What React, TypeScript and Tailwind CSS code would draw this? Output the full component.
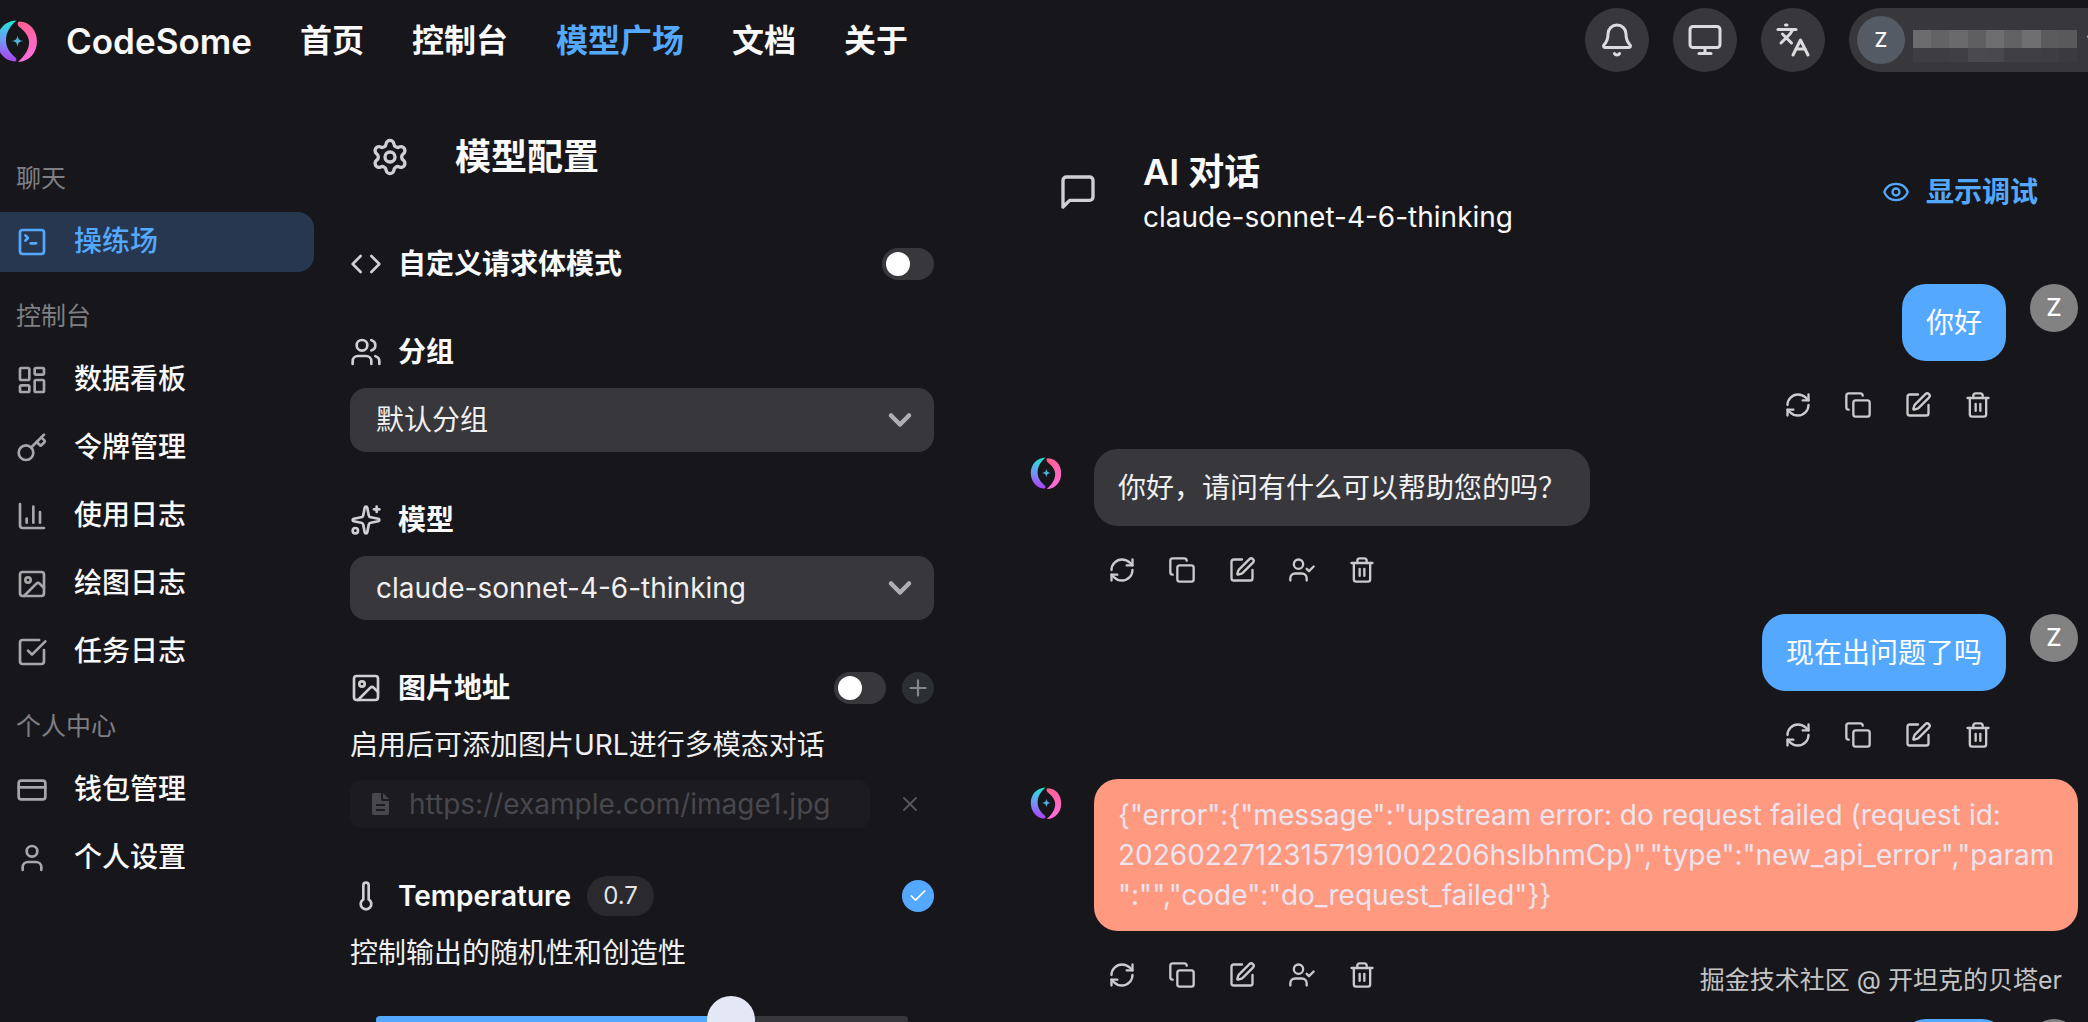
import React, { useId, useState } from 'react';
import {
  Bell,
  ChartColumn,
  Check,
  ChevronDown,
  Code,
  Copy,
  CreditCard,
  Eye,
  Image as ImageIcon,
  Key,
  Languages,
  LayoutDashboard,
  Monitor,
  Plus,
  RefreshCw,
  Settings,
  Sparkles,
  SquareCheckBig,
  SquarePen,
  SquareTerminal,
  Thermometer,
  Trash2,
  User,
  UserCheck,
  Users,
  X,
  type LucideIcon,
} from 'lucide-react';

const NAV = ['首页', '控制台', '模型广场', '文档', '关于'];

const MENU: { title: string; items: { label: string; icon: LucideIcon }[] }[] = [
  { title: '聊天', items: [{ label: '操练场', icon: SquareTerminal }] },
  {
    title: '控制台',
    items: [
      { label: '数据看板', icon: LayoutDashboard },
      { label: '令牌管理', icon: Key },
      { label: '使用日志', icon: ChartColumn },
      { label: '绘图日志', icon: ImageIcon },
      { label: '任务日志', icon: SquareCheckBig },
    ],
  },
  {
    title: '个人中心',
    items: [
      { label: '钱包管理', icon: CreditCard },
      { label: '个人设置', icon: User },
    ],
  },
];

type Message = { role: 'user' | 'assistant'; text: string; error?: boolean };

const MESSAGES: Message[] = [
  { role: 'user', text: '你好' },
  { role: 'assistant', text: '你好，请问有什么可以帮助您的吗？' },
  { role: 'user', text: '现在出问题了吗' },
  {
    role: 'assistant',
    error: true,
    text: '{"error":{"message":"upstream error: do request failed (request id: 20260227123157191002206hslbhmCp)","type":"new_api_error","param":"","code":"do_request_failed"}}',
  },
  { role: 'user', text: '你好' },
];

const Logo: React.FC<{ className: string }> = ({ className }) => {
  const id = useId();
  return (
    <svg viewBox="0 0 40 40" className={className} aria-hidden="true">
      <defs>
        <linearGradient id={`${id}l`} x1="0.6" y1="0" x2="0.5" y2="1">
          <stop offset="0" stopColor="#1fe6d6" />
          <stop offset="0.5" stopColor="#6f9bf5" />
          <stop offset="1" stopColor="#b03cf5" />
        </linearGradient>
        <linearGradient id={`${id}r`} x1="0.3" y1="0" x2="0.5" y2="1">
          <stop offset="0" stopColor="#ff5f8f" />
          <stop offset="1" stopColor="#ff6ee0" />
        </linearGradient>
      </defs>
      <path d="M19.500 0.500C8 1 1 9.500 1 20s7 19 16.500 19.500c2 0 2.500-2 1.200-3.500C13 31 9.500 26 9.500 19.500 9.500 12 13.500 5.500 19.500 0.500Z" fill={`url(#${id}l)`} />
      <path d="M22.500 1.500C32.500 2 39 10 39 20.500S32 39.500 21 40C27.500 34 31.500 28 31.500 21.500 31.500 15 27 10.500 22 6.500c-2-2-1.500-5 0.500-5Z" fill={`url(#${id}r)`} />
      <path d="M20.500 14.500c0.600 3.900 1.600 4.900 5.500 5.500-3.900 0.600-4.900 1.600-5.500 5.500-0.600-3.900-1.600-4.900-5.500-5.500 3.900-0.600 4.900-1.600 5.500-5.500Z" fill="#4db0dd" />
    </svg>
  );
};

const MessageIcon: React.FC = () => (
  <svg
    viewBox="0 0 24 24"
    className="size-10 shrink-0 text-[#d0d0d3]"
    fill="none"
    stroke="currentColor"
    strokeWidth="2"
    strokeLinecap="round"
    strokeLinejoin="round"
    aria-hidden="true"
  >
    <path d="M21 15a2 2 0 0 1-2 2H7l-4 4V5a2 2 0 0 1 2-2h14a2 2 0 0 1 2 2z" />
  </svg>
);

const FileIcon: React.FC = () => (
  <svg viewBox="0 0 24 24" className="size-6 shrink-0" aria-hidden="true">
    <path
      d="M6 1h7v6a2 2 0 0 0 2 2h6v12a2 2 0 0 1-2 2H6a2 2 0 0 1-2-2V3a2 2 0 0 1 2-2Zm2 11v2h9v-2H8Zm0 5v2h9v-2H8Z"
      fill="currentColor"
      fillRule="evenodd"
    />
    <path d="M15 1l6 6h-5a1 1 0 0 1-1-1V1Z" fill="currentColor" />
  </svg>
);

// Masked user name: each tone is one tile
const MASK_TOP = ['bg-[#6c6c6e]', 'bg-[#636365]', 'bg-[#6a6a6c]', 'bg-[#5f5f61]', 'bg-[#6e6e70]', 'bg-[#626264]', 'bg-[#6f6f71]', 'bg-[#5b5b5d]', 'bg-[#59595b]'];
const MASK_BOTTOM = ['bg-[#3e3d42]', 'bg-[#3e3d42]', 'bg-[#403f44]', 'bg-[#4a4a4e]', 'bg-[#49494d]', 'bg-[#403f44]', 'bg-[#403f44]', 'bg-[#3e3d42]', 'bg-[#3b3a3f]'];

const Header: React.FC = () => (
  <header className="flex h-20 shrink-0 items-center justify-between">
    <div className="flex items-center pt-0.5">
      <Logo className="-ml-1 mr-6 size-[42px]" />
      <span className="mr-12 pl-1 text-[35px] font-semibold leading-10">CodeSome</span>
      <nav className="flex gap-12 text-[32px] font-semibold leading-10">
        {NAV.map((item) => (
          <a key={item} href="#" className={item === '模型广场' ? 'text-[#54a9ff]' : 'text-[#f9f9f9]'}>
            {item}
          </a>
        ))}
      </nav>
    </div>
    <div className="flex items-center gap-6 text-[#dcdcde]">
      {[
        { icon: Bell, label: '通知' },
        { icon: Monitor, label: '主题' },
        { icon: Languages, label: '语言' },
      ].map(({ icon: Icon, label }) => (
        <button key={label} type="button" aria-label={label} className="flex size-16 items-center justify-center rounded-full bg-[#38373c]">
          <Icon size={36} />
        </button>
      ))}
      <button type="button" aria-label="账户" className="flex h-16 w-[239px] items-center overflow-hidden rounded-l-full bg-[#38373c] pl-2">
        <span className="flex size-12 shrink-0 items-center justify-center rounded-full bg-[#555b64] text-xl font-medium text-white">Z</span>
        <span className="ml-2 mt-3 w-[164px] shrink-0">
          <span className="flex h-[18px]">
            {MASK_TOP.map((tone, i) => (
              <span key={i} className={`flex-1 ${tone}`} />
            ))}
          </span>
          <span className="flex h-[14px]">
            {MASK_BOTTOM.map((tone, i) => (
              <span key={i} className={`flex-1 ${tone}`} />
            ))}
          </span>
        </span>
        <ChevronDown size={28} className="ml-1 shrink-0 text-[#a0a0a3]" />
      </button>
    </div>
  </header>
);

const Sidebar: React.FC = () => (
  <aside className="w-[314px] shrink-0 pt-[54px]">
    {MENU.map((group) => (
      <section key={group.title}>
        <h2 className="pb-4 pl-4 pt-[26px] text-[25px] leading-9 text-[#7f7f83]">{group.title}</h2>
        <ul className="flex flex-col gap-2">
          {group.items.map(({ label, icon: Icon }) => {
            const active = label === '操练场';
            return (
              <li key={label}>
                <a
                  href="#"
                  className={`flex h-[60px] items-center gap-[26px] rounded-r-2xl pl-4 text-[28px] font-medium leading-10 ${
                    active ? 'bg-[#273750] text-[#54a9ff]' : 'text-[#f9f9f9]'
                  }`}
                >
                  <Icon size={32} className={active ? '' : 'text-[#a7a7aa]'} />
                  <span className="pb-0.5">{label}</span>
                </a>
              </li>
            );
          })}
        </ul>
      </section>
    ))}
  </aside>
);

const Toggle: React.FC<{ label: string }> = ({ label }) => {
  const [on, setOn] = useState(false);
  return (
    <label className={`flex h-8 w-[52px] items-center rounded-full px-1 ${on ? 'justify-end bg-[#54a9ff]' : 'bg-[#38373c]'}`}>
      <input type="checkbox" role="switch" aria-label={label} checked={on} onChange={(e) => setOn(e.target.checked)} className="sr-only" />
      <span className="size-6 rounded-full bg-white" />
    </label>
  );
};

const FieldLabel: React.FC<{ icon: LucideIcon; text: string; htmlFor?: string }> = ({ icon: Icon, text, htmlFor }) => (
  <label htmlFor={htmlFor} className="flex h-8 items-center gap-4 text-[28px] font-semibold leading-8">
    <Icon size={32} className="text-[#d0d0d3]" />
    {text}
  </label>
);

const SelectBox: React.FC<{ id: string; value: string }> = ({ id, value }) => (
  <div className="relative mt-5">
    <select
      id={id}
      defaultValue={value}
      className="h-16 w-full appearance-none rounded-2xl bg-[#38373c] px-[26px] text-[28px] leading-10 text-[#f0f0f1] outline-none"
    >
      <option>{value}</option>
    </select>
    <ChevronDown size={36} strokeWidth={3} className="pointer-events-none absolute right-4 top-[14px] text-[#b0b0b3]" />
  </div>
);

const ConfigPanel: React.FC = () => {
  const [temperature, setTemperature] = useState(0.7);
  const filled = ((temperature - 0.1) / 0.9) * 100;

  return (
    <section className="w-[584px] shrink-0 pt-10">
      <h1 className="flex h-[74px] items-center gap-[45px] pl-5 text-[36px] font-semibold leading-[48px]">
        <Settings size={40} className="text-[#d0d0d3]" />
        模型配置
      </h1>

      <div className="mt-[54px] flex items-center justify-between">
        <FieldLabel icon={Code} text="自定义请求体模式" />
        <Toggle label="自定义请求体模式" />
      </div>

      <div className="mt-14">
        <FieldLabel icon={Users} text="分组" htmlFor="group" />
        <SelectBox id="group" value="默认分组" />
      </div>

      <div className="mt-[52px]">
        <FieldLabel icon={Sparkles} text="模型" htmlFor="model" />
        <SelectBox id="model" value="claude-sonnet-4-6-thinking" />
      </div>

      <div className="mt-[52px]">
        <div className="flex items-center justify-between">
          <FieldLabel icon={ImageIcon} text="图片地址" htmlFor="image-url" />
          <div className="flex items-center gap-4">
            <Toggle label="图片地址" />
            <button type="button" aria-label="添加图片" className="flex size-8 items-center justify-center rounded-full bg-[#2b2e33] text-[#85868a]">
              <Plus size={26} strokeWidth={2} />
            </button>
          </div>
        </div>
        <p className="mt-[21px] text-[28px] leading-10 text-[#f0f0f1]">启用后可添加图片URL进行多模态对话</p>
        <div className="mt-[15px] flex items-center">
          <div className="flex h-12 w-[520px] items-center gap-[17px] rounded-xl bg-[#1c1b20] pl-[18px] text-[#48484c]">
            <FileIcon />
            <input
              id="image-url"
              type="text"
              disabled
              placeholder="https://example.com/image1.jpg"
              className="min-w-0 flex-1 bg-transparent text-[28px] leading-10 outline-none placeholder:text-[#48484c]"
            />
          </div>
          <button type="button" aria-label="移除" className="ml-7 text-[#55555a]">
            <X size={24} strokeWidth={2} />
          </button>
        </div>
      </div>

      <div className="mt-12">
        <div className="flex h-10 items-center">
          <FieldLabel icon={Thermometer} text="Temperature" htmlFor="temperature" />
          <span className="ml-4 flex h-10 items-center rounded-full bg-[#29292e] px-4 text-2xl text-[#e4e4e6]">{temperature}</span>
          <button type="button" aria-label="启用 Temperature" className="ml-auto flex size-8 items-center justify-center rounded-full bg-[#54a9ff] text-white">
            <Check size={20} strokeWidth={2} />
          </button>
        </div>
        <p className="mt-[17px] text-[28px] leading-10 text-[#f0f0f1]">控制输出的随机性和创造性</p>
        <div className="relative mt-[23px] px-[26px] py-5">
          <div className="h-2 rounded-full bg-[#38373c]">
            <div className="h-2 rounded-full bg-[#54a9ff]" style={{ width: `${filled}%` }} />
          </div>
          <input
            id="temperature"
            type="range"
            min={0.1}
            max={1}
            step={0.1}
            value={temperature}
            onChange={(e) => setTemperature(Number(e.target.value))}
            className="absolute inset-x-[2px] top-0 h-12 appearance-none bg-transparent [&::-webkit-slider-thumb]:size-12 [&::-webkit-slider-thumb]:appearance-none [&::-webkit-slider-thumb]:rounded-full [&::-webkit-slider-thumb]:bg-[#e4e7f5]"
          />
        </div>
      </div>
    </section>
  );
};

const ACTIONS = [
  { label: '重试', icon: RefreshCw },
  { label: '复制', icon: Copy },
  { label: '编辑', icon: SquarePen },
  { label: '切换角色', icon: UserCheck },
  { label: '删除', icon: Trash2 },
];

const ChatMessage: React.FC<{ message: Message }> = ({ message }) => {
  const isUser = message.role === 'user';
  // Only assistant replies can have their role switched
  const actions = isUser ? ACTIONS.filter((a) => a.label !== '切换角色') : ACTIONS;

  let tone = 'bg-[#38373c] px-6 pb-[18px] pt-[19px] text-[#f0f0f1]';
  if (isUser) tone = 'bg-[#54a9ff] px-6 pb-[18px] pt-[19px] text-white';
  if (message.error) tone = 'bg-[#ff9980] py-4 pl-6 pr-5 text-[#ede4ee]';

  return (
    <li className={`flex items-start ${isUser ? 'flex-row-reverse gap-6' : 'gap-8'}`}>
      {isUser ? (
        <span className="flex size-12 shrink-0 items-center justify-center rounded-full bg-[#828283] text-2xl font-medium text-white">Z</span>
      ) : (
        <Logo className="mt-2 size-8 shrink-0" />
      )}
      <div className={`flex min-w-0 flex-col ${isUser ? 'items-end' : 'items-start'}`}>
        <div className={`rounded-3xl text-[28px] leading-10 wrap-anywhere ${tone}`}>{message.text}</div>
        <div className="flex h-[88px] items-center gap-8 px-[14px] text-[#cbcbcd]">
          {actions.map(({ label, icon: Icon }) => (
            <button key={label} type="button" aria-label={label}>
              <Icon size={28} />
            </button>
          ))}
        </div>
      </div>
    </li>
  );
};

const ChatPanel: React.FC = () => (
  <section className="min-w-0 flex-1 pr-[10px] pt-[67px]">
    <div className="flex items-center pl-7 pr-10">
      <MessageIcon />
      <div className="ml-[45px]">
        <h2 className="text-[36px] font-semibold leading-[50px]">AI 对话</h2>
        <p className="text-[28px] leading-10">claude-sonnet-4-6-thinking</p>
      </div>
      <button type="button" className="ml-auto flex items-center gap-4 text-[28px] font-semibold leading-10 text-[#54a9ff]">
        <Eye size={28} />
        显示调试
      </button>
    </div>
    <ul className="mt-[47px]">
      {MESSAGES.map((message, i) => (
        <ChatMessage key={i} message={message} />
      ))}
    </ul>
  </section>
);

export default function App() {
  return (
    <div className="relative flex h-screen flex-col overflow-hidden bg-[#17171b] font-['Inter','Noto_Sans_CJK_SC',sans-serif] text-[#f9f9f9]">
      <Header />
      <main className="flex min-h-0 flex-1">
        <Sidebar />
        <div className="ml-9 flex min-w-0 flex-1 gap-24">
          <ConfigPanel />
          <ChatPanel />
        </div>
      </main>
      <p className="absolute bottom-6 right-[26px] text-[25px] leading-9 text-[#c4c4c5]">掘金技术社区 @ 开坦克的贝塔er</p>
    </div>
  );
}
